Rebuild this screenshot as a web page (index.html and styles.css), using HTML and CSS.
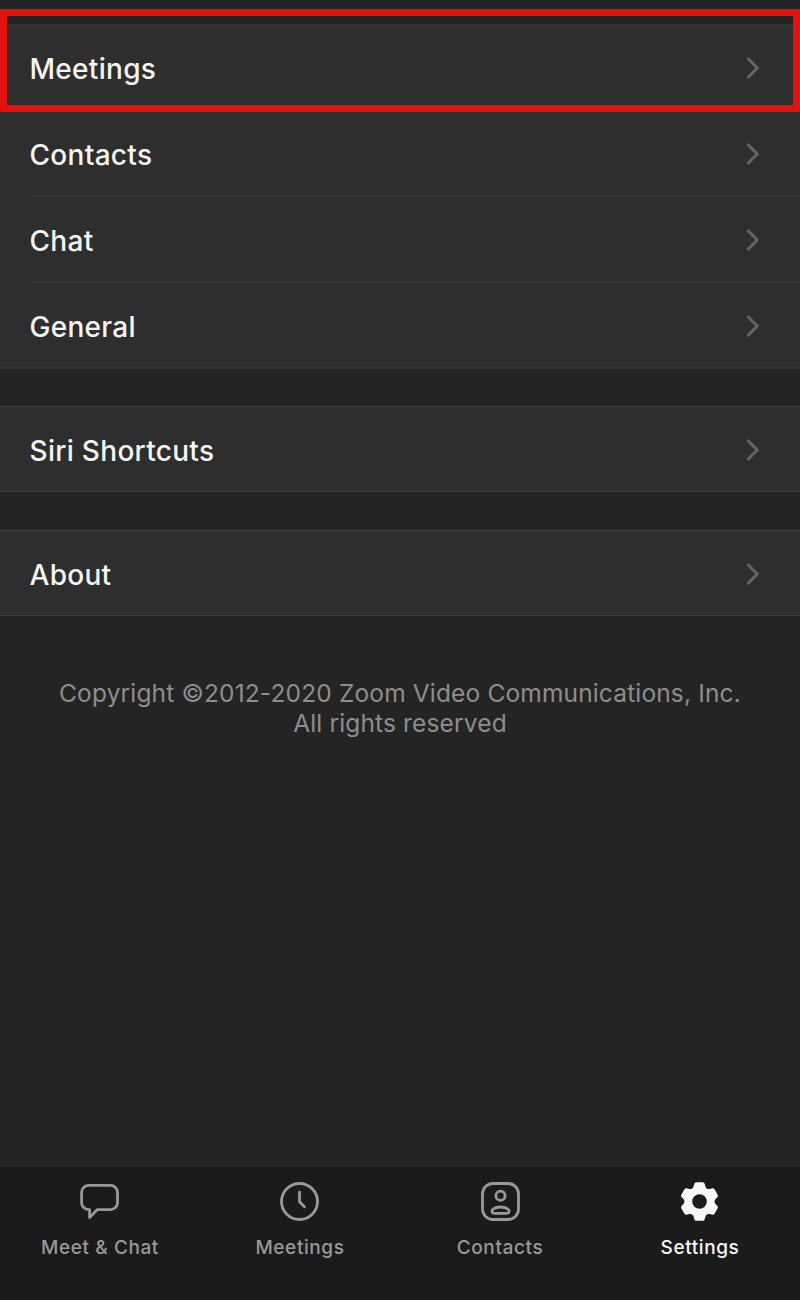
FILE: index.html
```
<!DOCTYPE html>
<html lang="en">
<head>
    <meta charset="UTF-8">
    <meta name="viewport" content="width=device-width, initial-scale=1.0">
    <title>Settings</title>
    <link rel="stylesheet" href="styles.css">
</head>
<body>
    <svg width="0" height="0" class="sprite">
        <symbol id="chevron" viewBox="0 0 14 22">
            <path d="M2.4 2 L11.2 11 L2.4 20" fill="none" stroke="currentColor" stroke-width="3.2" stroke-linecap="round" stroke-linejoin="round"/>
        </symbol>
    </svg>

    <main class="settings">
        <ul class="group">
            <li class="row highlighted"><span>Meetings</span><svg class="chevron"><use href="#chevron"/></svg></li>
            <li class="row"><span>Contacts</span><svg class="chevron"><use href="#chevron"/></svg></li>
            <li class="row"><span>Chat</span><svg class="chevron"><use href="#chevron"/></svg></li>
            <li class="row"><span>General</span><svg class="chevron"><use href="#chevron"/></svg></li>
        </ul>
        <ul class="group single">
            <li class="row"><span>Siri Shortcuts</span><svg class="chevron"><use href="#chevron"/></svg></li>
        </ul>
        <ul class="group single">
            <li class="row"><span>About</span><svg class="chevron"><use href="#chevron"/></svg></li>
        </ul>
        <p class="copyright">Copyright ©2012-2020 Zoom Video Communications, Inc.<br>All rights reserved</p>
    </main>

    <nav class="tabs">
        <div class="tab">
            <svg class="icon" viewBox="0 0 40 40" fill="none" stroke="currentColor" stroke-width="2.8">
                <path d="M8.6 3.4 H30.6 A6.9 6.9 0 0 1 37.5 10.3 V20.7 A6.9 6.9 0 0 1 30.6 27.6 H17.4 L9.6 35.6 V27.6 H8.6 A6.9 6.9 0 0 1 1.6 20.7 V10.3 A6.9 6.9 0 0 1 8.6 3.4 Z" stroke-linejoin="round"/>
            </svg>
            <span class="label">Meet &amp; Chat</span>
        </div>
        <div class="tab">
            <svg class="icon" viewBox="0 0 40 40" fill="none" stroke="currentColor" stroke-width="2.8">
                <circle cx="19.5" cy="19.5" r="18"/>
                <path d="M19.5 10.2 V19.8 L24.5 24.8" stroke-linecap="round" stroke-linejoin="round"/>
            </svg>
            <span class="label">Meetings</span>
        </div>
        <div class="tab">
            <svg class="icon" viewBox="0 0 40 40" fill="none" stroke="currentColor" stroke-width="2.8">
                <rect x="2.5" y="1.5" width="36" height="36" rx="10.5"/>
                <circle cx="20.5" cy="13.8" r="4.6"/>
                <path d="M14.6 31.3 C11.4 31.3 11.2 28.4 13.4 26.8 C17 24.4 24 24.4 27.6 26.8 C29.8 28.4 29.6 31.3 26.4 31.3 Z"/>
            </svg>
            <span class="label">Contacts</span>
        </div>
        <div class="tab active">
            <svg class="icon" viewBox="0.5 0.5 40 40" fill="currentColor">
                <path fill-rule="evenodd" d="M17 .8 H23 C24.5 .8 25 1.7 25.4 3.1 L26 5.2 C26.6 6.9 28.3 7.9 30.1 7.4 L32.2 6.9 C33.5 6.5 34.5 6.8 35.2 8 L38 12.9 C38.7 14.1 38.5 15.1 37.5 16 L36 17.5 C34.7 18.9 34.7 21.1 36 22.5 L37.5 24 C38.5 24.9 38.7 25.9 38 27.1 L35.2 32 C34.5 33.2 33.5 33.5 32.2 33.1 L30.1 32.6 C28.3 32.1 26.6 33.1 26 34.8 L25.4 36.9 C25 38.3 24.5 39.2 23 39.2 H17 C15.5 39.2 15 38.3 14.6 36.9 L14 34.8 C13.4 33.1 11.7 32.1 9.9 32.6 L7.8 33.1 C6.5 33.5 5.5 33.2 4.8 32 L2 27.1 C1.3 25.9 1.5 24.9 2.5 24 L4 22.5 C5.3 21.1 5.3 18.9 4 17.5 L2.5 16 C1.5 15.1 1.3 14.1 2 12.9 L4.8 8 C5.5 6.8 6.5 6.5 7.8 6.9 L9.9 7.4 C11.7 7.9 13.4 6.9 14 5.2 L14.6 3.1 C15 1.7 15.5 .8 17 .8 Z M20 12.7 A7.3 7.3 0 1 0 20 27.3 A7.3 7.3 0 1 0 20 12.7 Z"/>
            </svg>
            <span class="label">Settings</span>
        </div>
    </nav>
</body>
</html>
```
FILE: styles.css
```
* {
    box-sizing: border-box;
}
body {
    margin: 0;
    height: 1300px;
    display: flex;
    flex-direction: column;
    background: #242424;
    color: #f5f5f5;
    font-family: Inter, "Liberation Sans", sans-serif;
    overflow: hidden;
}
.sprite {
    position: absolute;
}
.settings {
    flex: 1;
    padding-top: 24px;
}
.group {
    list-style: none;
    margin: 0 0 37px;
    padding: 0;
    background: #2e2e2e;
    border-top: 2px solid #333;
    border-bottom: 2px solid #343434;
}
.row {
    position: relative;
    display: flex;
    align-items: center;
    justify-content: space-between;
    height: 86px;
    padding: 0 40px 0 29.5px;
    font-size: 28px;
    font-weight: 450;
    line-height: 34px;
    letter-spacing: 0.3px;
}
.row span {
    padding-top: 2px;
}
.row:first-child {
    height: 85px;
    padding-bottom: 2px;
}
.row:last-child {
    height: 84px;
    padding-top: 1px;
}
/* inset divider between rows */
.row:not(.highlighted):not(:last-child)::after {
    content: "";
    position: absolute;
    left: 29px;
    right: 0;
    bottom: 0;
    height: 2px;
    background: #343434;
}
.highlighted::before {
    content: "";
    position: absolute;
    top: -17px;
    left: 0;
    right: 0;
    height: 89px;
    border: 7px solid #e3110f;
}
.single {
    border-width: 1px;
    border-color: #3d3d3d;
    margin-bottom: 38px;
}
.single .row {
    padding-bottom: 0;
}
.chevron {
    width: 14px;
    height: 22px;
    color: #646467;
}
.copyright {
    margin: 62px 0 0;
    text-align: center;
    font-size: 24.5px;
    line-height: 30px;
    letter-spacing: 0.15px;
    color: #8e8e8e;
}
.tabs {
    display: flex;
    height: 133px;
    background: #1b1b1b;
}
.tab {
    flex: 1;
    display: flex;
    flex-direction: column;
    align-items: center;
    padding-top: 15px;
    color: #999;
}
.active {
    color: #f7f7f7;
}
.icon {
    width: 40px;
    height: 40px;
}
.label {
    margin-top: 14px;
    font-size: 19px;
    font-weight: 450;
    line-height: 23px;
    letter-spacing: 0.6px;
}
```
